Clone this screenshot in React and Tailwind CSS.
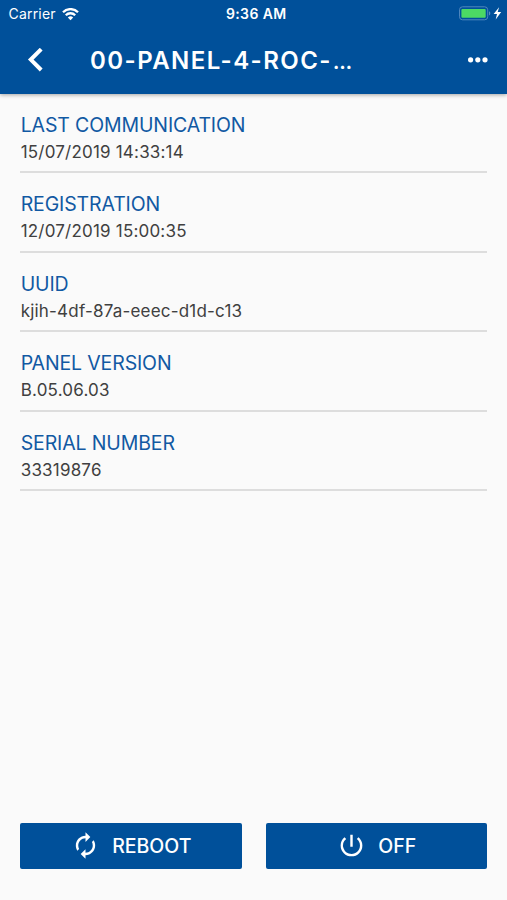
import React from 'react';
import { MdAutorenew, MdPowerSettingsNew } from 'react-icons/md';

const details = [
    { label: 'LAST COMMUNICATION', value: '15/07/2019 14:33:14' },
    { label: 'REGISTRATION', value: '12/07/2019 15:00:35' },
    { label: 'UUID', value: 'kjih-4df-87a-eeec-d1d-c13' },
    { label: 'PANEL VERSION', value: 'B.05.06.03' },
    { label: 'SERIAL NUMBER', value: '33319876' },
];

const WifiIcon = () => (
    <svg width="17" height="13" viewBox="0 0 17 13" fill="none" stroke="white" strokeWidth="2.3">
        <path d="M1 4.2a10.6 10.6 0 0 1 15 0" />
        <path d="M3.8 7.2a6.7 6.7 0 0 1 9.4 0" />
        <path d="M8.5 12.2 5.8 9.5a3.8 3.8 0 0 1 5.4 0z" fill="white" stroke="none" />
    </svg>
);

const BatteryIcon = () => (
    <svg width="44" height="16" viewBox="0 0 44 16" fill="none">
        <rect x="0.5" y="0.8" width="28.2" height="13" rx="3" stroke="#4f86bd" />
        <rect x="2.4" y="2.9" width="24.3" height="8.9" rx="1" fill="#4cd964" />
        <path d="M30.1 5.3v4.2c1.6-.6 1.6-3.6 0-4.2z" fill="#6699c9" />
        <path d="M40.1 1.3 34.6 8.1H38l-1.3 5.4L42.2 6h-3.5z" fill="white" />
    </svg>
);

const StatusBar = () => (
    <div className="grid h-7 grid-cols-3 items-center pl-[8.5px] pr-[4px] text-sm leading-none">
        <div className="flex items-center gap-1.5">
            <span className="tracking-[0.2px]">Carrier</span>
            <WifiIcon />
        </div>
        <span className="pl-px text-center font-semibold tracking-[0.4px]">9:36 AM</span>
        <div className="flex justify-end">
            <BatteryIcon />
        </div>
    </div>
);

const Header = () => (
    <header className="h-[94px] shrink-0 bg-[#00509a] text-white shadow-[0_1px_4px_rgba(0,0,0,0.35)]">
        <StatusBar />
        <div className="flex h-[64px] items-center pl-[27px] pr-[19px]">
            <button aria-label="Back">
                <svg width="16" height="24" viewBox="0 0 16 24" fill="none" stroke="white" strokeWidth="4">
                    <path d="M14.2 1.2 3.8 11.6l10.4 10.4" />
                </svg>
            </button>
            <h1 className="ml-[47px] flex-1 whitespace-nowrap pt-px text-2xl font-semibold tracking-[1.45px]">
                00-PANEL-4-ROC-<span className="ml-px text-[19px] font-bold tracking-normal">…</span>
            </h1>
            <button aria-label="More">
                <svg width="20" height="6" viewBox="0 0 20 6" fill="white">
                    <circle cx="2.6" cy="2.8" r="2.6" />
                    <circle cx="9.8" cy="2.8" r="2.6" />
                    <circle cx="17" cy="2.8" r="2.6" />
                </svg>
            </button>
        </div>
    </header>
);

const DetailRow = ({ label, value }) => (
    <div className="h-[79.4px] border-b-2 border-[#dddddd] pt-[18px] pl-[0.7px]">
        <p className="text-[19.5px] leading-[26px] tracking-[-0.13px] text-[#1159a3]">{label}</p>
        <p className="mt-px text-[17px] leading-[26px] tracking-[0.2px] text-[#404040]">{value}</p>
    </div>
);

export default function App() {
    return (
        <div className="flex h-[900px] w-full flex-col bg-[#fafafa] font-['Inter',sans-serif]">
            <Header />
            <main className="flex-1 px-5">
                {details.map((item) => (
                    <DetailRow key={item.label} label={item.label} value={item.value} />
                ))}
            </main>
            <footer className="flex gap-6 px-5 pb-[31px] text-[19.5px] font-medium text-white">
                <button className="flex h-[46px] flex-1 items-center justify-center gap-3 rounded-[2px] bg-[#00509a] pl-px">
                    <MdAutorenew size={29} className="mb-[2px]" />
                    <span className="pt-[2px]">REBOOT</span>
                </button>
                <button className="flex h-[46px] flex-1 items-center justify-center gap-3 rounded-[2px] bg-[#00509a] pl-px">
                    <MdPowerSettingsNew size={29} className="mb-[2px]" />
                    <span className="pt-[2px]">OFF</span>
                </button>
            </footer>
        </div>
    );
}
